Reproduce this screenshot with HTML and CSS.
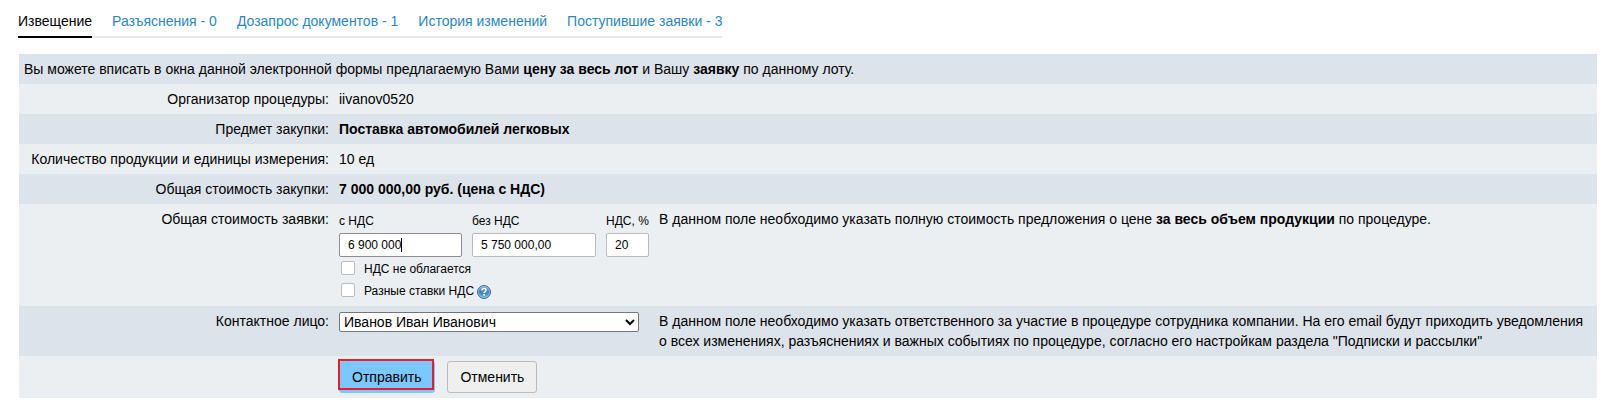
FILE: index.html
```html
<!DOCTYPE html>
<html lang="ru">

<head>
    <meta charset="UTF-8" />
    <meta name="viewport" content="width=device-width, initial-scale=1.0" />
    <title>Извещение</title>
    <link rel="stylesheet" href="styles.css">
</head>

<body>
    <nav class="tabs">
        <a href="#notice" class="active">Извещение</a>
        <a href="#explanations">Разъяснения - 0</a>
        <a href="#documents">Дозапрос документов - 1</a>
        <a href="#history">История изменений</a>
        <a href="#bids">Поступившие заявки - 3</a>
    </nav>

    <form class="bid-form">
        <div class="intro">Вы можете вписать в окна данной электронной формы предлагаемую Вами <b>цену за весь лот</b> и Вашу <b>заявку</b> по данному лоту.</div>
        <div class="row">
            <div class="label">Организатор процедуры:</div>
            <div>iivanov0520</div>
        </div>
        <div class="row">
            <div class="label">Предмет закупки:</div>
            <div><b>Поставка автомобилей легковых</b></div>
        </div>
        <div class="row">
            <div class="label">Количество продукции и единицы измерения:</div>
            <div>10 ед</div>
        </div>
        <div class="row">
            <div class="label">Общая стоимость закупки:</div>
            <div><b>7 000 000,00 руб. (цена с НДС)</b></div>
        </div>
        <div class="row">
            <div class="label">Общая стоимость заявки:</div>
            <div>
                <div class="prices">
                    <div class="field">
                        <label for="priceVat">с НДС</label>
                        <input type="text" id="priceVat" class="current" value="6 900 000" />
                        <span class="caret"></span>
                    </div>
                    <div class="field">
                        <label for="priceNoVat">без НДС</label>
                        <input type="text" id="priceNoVat" value="5 750 000,00" />
                    </div>
                    <div class="field">
                        <label for="vat">НДС, %</label>
                        <input type="text" id="vat" value="20" />
                    </div>
                </div>
                <div class="check">
                    <input type="checkbox" id="noVat" />
                    <label for="noVat">НДС не облагается</label>
                </div>
                <div class="check">
                    <input type="checkbox" id="mixedVat" />
                    <label for="mixedVat">Разные ставки НДС</label>
                    <svg class="help" viewBox="0 0 14 14">
                        <defs>
                            <linearGradient id="ball" x1="0" y1="0" x2="0" y2="1">
                                <stop offset="0" stop-color="#86b4da" />
                                <stop offset="0.5" stop-color="#3f80bb" />
                                <stop offset="1" stop-color="#6fbcea" />
                            </linearGradient>
                        </defs>
                        <circle cx="7" cy="7" r="6.5" fill="url(#ball)" stroke="#3b6a94" stroke-width="1" />
                        <circle cx="7" cy="7" r="5.6" fill="none" stroke="#a9d0ee" stroke-width="0.6" />
                        <path d="M5 5.4C5 4.2 5.9 3.6 7 3.6s2 .6 2 1.7c0 1.2-1.9 1.3-1.9 2.6" fill="none" stroke="#fff" stroke-width="1.5" />
                        <circle cx="7.1" cy="10" r="0.9" fill="#fff" />
                    </svg>
                </div>
            </div>
            <div>В данном поле необходимо указать полную стоимость предложения о цене <b>за весь объем продукции</b> по процедуре.</div>
        </div>
        <div class="row">
            <label class="label" for="contact">Контактное лицо:</label>
            <div class="contact">
                <select id="contact">
                    <option>Иванов Иван Иванович</option>
                </select>
            </div>
            <div>В данном поле необходимо указать ответственного за участие в процедуре сотрудника компании. На его email будут приходить уведомления о всех изменениях, разъяснениях и важных событиях по процедуре, согласно его настройкам раздела "Подписки и рассылки"</div>
        </div>
        <div class="row">
            <div class="label"></div>
            <div class="buttons">
                <button type="submit" class="send">Отправить</button>
                <button type="reset">Отменить</button>
            </div>
        </div>
    </form>
</body>

</html>
```
FILE: styles.css
```css
* {
    box-sizing: border-box;
}

body {
    font: 14px/20px "Liberation Sans", Arial, sans-serif;
    background: #fff;
    color: #000;
    margin: 0;
    padding: 10px 15px 15px 18px;
}

.tabs {
    display: inline-flex;
    gap: 20px;
    border-bottom: 2px solid #e8e8e8;
    margin-bottom: 16px;
    vertical-align: top;
}

.tabs a {
    color: #2b87c8;
    text-decoration: none;
    padding: 1px 0 5px;
    border-bottom: 2px solid transparent;
    margin-bottom: -2px;
}

.tabs a.active {
    color: #000;
    border-bottom-color: #000;
}

.bid-form {
    margin-left: 1px;
}

.intro {
    background: #dde3ea;
    padding: 5px;
}

.row {
    display: grid;
    grid-template-columns: 310px 310px 1fr;
    gap: 10px;
    padding: 5px 10px 5px 0;
    background: #ebeff2;
}

.row:nth-child(odd) {
    background: #dde3ea;
}

.label {
    text-align: right;
}

.prices {
    display: grid;
    grid-template-columns: 123fr 124fr 43px;
    gap: 10px;
}

.field {
    position: relative;
    font-size: 12px;
    line-height: 24px;
}

.field label {
    display: block;
    white-space: nowrap;
}

.field input {
    display: block;
    width: 100%;
    height: 24px;
    padding: 0 8px;
    border: 1px solid #bbb;
    border-radius: 2px;
    background: #fff;
    font: inherit;
    color: #000;
    outline: none;
}

.field input.current {
    border-color: #8f8b90;
}

.caret {
    position: absolute;
    left: 62px;
    bottom: 5px;
    width: 1px;
    height: 14px;
    background: #000;
}

.check {
    display: flex;
    align-items: center;
    height: 22px;
    font-size: 12px;
}

.check input {
    appearance: none;
    width: 14px;
    height: 14px;
    margin: 0 9px 0 2px;
    border: 1px solid #bbb;
    border-radius: 2px;
    background: #fff;
}

.check label {
    padding-top: 1px;
}

.help {
    width: 14px;
    height: 14px;
    margin: 3px 0 0 3px;
}

.contact select {
    display: block;
    width: 300px;
    height: 20px;
    margin-top: 1px;
    padding: 0;
    border: 1px solid #767676;
    border-radius: 2px;
    background: #fff;
    font: inherit;
    color: #000;
}

.buttons {
    display: flex;
    gap: 12px;
}

.buttons button {
    position: relative;
    height: 32px;
    padding: 0 12px;
    border: 1px solid #bbb;
    border-radius: 3px;
    background: #efefef;
    font: inherit;
    color: #000;
    cursor: pointer;
}

.buttons .send {
    padding-right: 13px;
    background: #7ac8ff;
    border-color: #7ac8ff;
}

/* red highlight frame over the main button */
.buttons .send::after {
    content: "";
    position: absolute;
    inset: -3px 0 2px -2px;
    border: 2px solid #ed1c24;
}
```
